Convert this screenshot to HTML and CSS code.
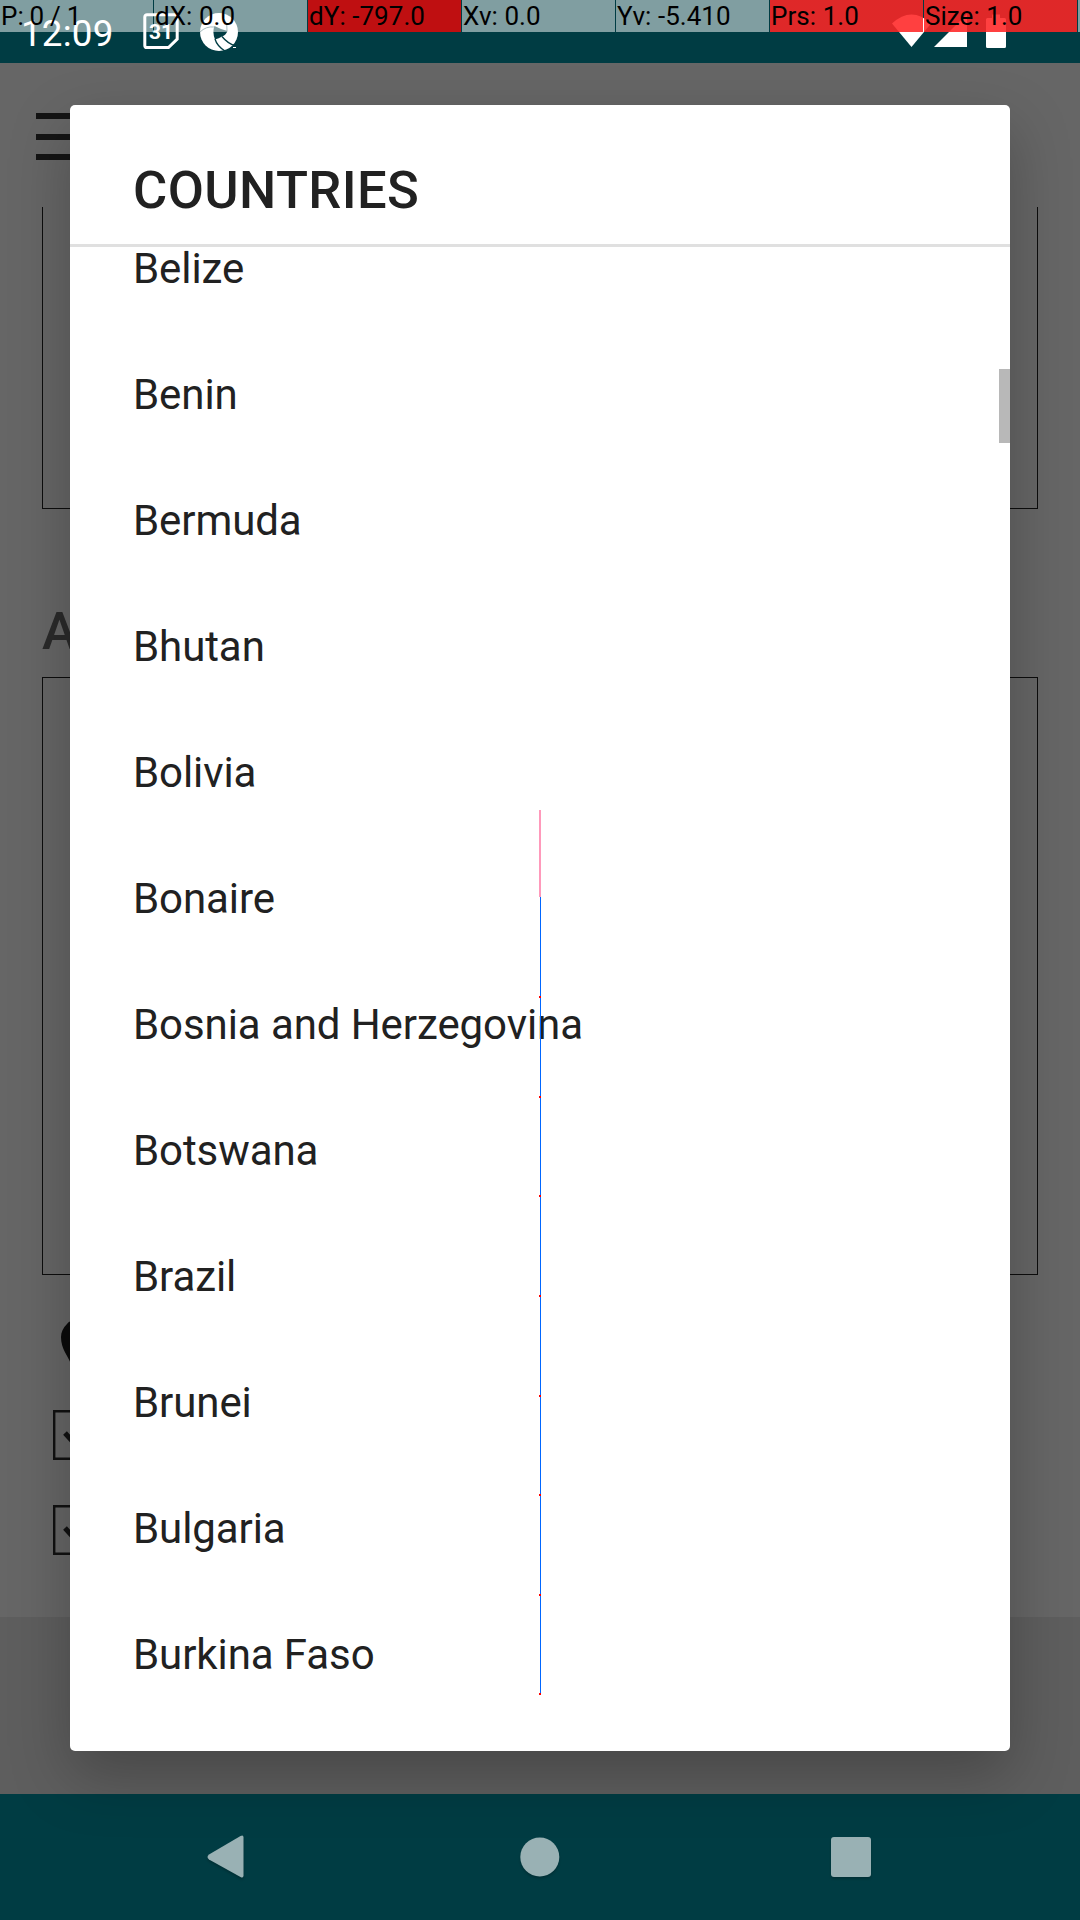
FILE: index.html
```html
<!DOCTYPE html>
<html lang="en">
<head>
<meta charset="utf-8">
<title>Countries</title>
<link rel="stylesheet" href="styles.css">
</head>
<body>
<div class="screen">
  <header class="status">
    <span class="clock">12:09</span>
    <svg class="calendar" viewBox="0 0 36 37">
      <path d="M4 1.7H32a2.2 2.2 0 0 1 2.2 2.2V26L25.500 34.600H4A2.200 2.200 0 0 1 1.800 32.400V3.900A2.200 2.200 0 0 1 4 1.700Z" fill="none" stroke="#fff" stroke-width="3"/>
      <text x="18" y="25.500" text-anchor="middle" class="calendar-day">31</text>
    </svg>
    <svg class="shutter" viewBox="0 0 38 40">
      <circle cx="19" cy="20" r="19" fill="#fff"/>
      <path d="M14.500 14Q20 17 27.500 19Q25.500 23.500 22 24.500Q19 26.500 15 27.500Q12 20 14.500 14Z" fill="#003c43"/>
      <path d="M22 24.500Q28 32 36 34M15 27Q17 34 25 39" fill="none" stroke="#003c43" stroke-width="1.300"/>
      <path d="M14.500 15Q6 14 0 20M27 19Q28 12 24 7" fill="none" stroke="#003c43" stroke-width=".7"/>
      <path d="M33 35.500H36" stroke="#fff" stroke-width="1"/>
    </svg>
    <svg class="signals" viewBox="0 0 116 36">
      <path d="M0 9.500Q19.500-8.500 39 9.500L19.500 33Z" fill="#fff"/>
      <path d="M42 33 75 0V33Z" fill="#fff"/>
      <path d="M95.500 4H100V0.500H108V4H112.500Q114 4 114 5.500V32.500Q114 34 112.500 34H95.500Q94 34 94 32.500V5.500Q94 4 95.500 4Z" fill="#fff"/>
    </svg>
  </header>

  <main class="page">
    <div class="toolbar">
      <div class="burger"><i></i><i></i><i></i></div>
    </div>
    <section class="box box-first"></section>
    <h2 class="section-title">A</h2>
    <section class="box box-second"></section>
    <div class="options">
      <svg class="pin" viewBox="0 0 44 60"><path d="M22 0C16 0 9 2 6 6C2 10 0 14 0 19C0 31 7 38 10 46L22 60C32 46 44 35 44 21C44 8 33 0 22 0Z" fill="#0b0b0b"/></svg>
      <svg class="check" viewBox="0 0 50 50"><path d="M1.200 1.200H48.800V48.800H1.200Z" fill="none" stroke="#111" stroke-width="2.400"/><path d="M12 23 21 33 38 14" fill="none" stroke="#111" stroke-width="5"/></svg>
      <svg class="check" viewBox="0 0 50 50"><path d="M1.200 1.200H48.800V48.800H1.200Z" fill="none" stroke="#111" stroke-width="2.400"/><path d="M12 23 21 33 38 14" fill="none" stroke="#111" stroke-width="5"/></svg>
    </div>
    <div class="page-end"></div>
  </main>

  <nav class="navbar">
    <svg viewBox="0 0 44 44"><path d="M39.500 2.500V40.500Q39.500 43.500 36.500 42L5 24.500Q2 22 5 19.500L36.500 1Q39.500-.5 39.500 2.500Z" /></svg>
    <svg viewBox="0 0 44 44"><circle cx="22.800" cy="22" r="19.500"/></svg>
    <svg viewBox="0 0 44 44"><rect x="2" y="2" width="40" height="40" rx="3"/></svg>
  </nav>

  <div class="dialog">
    <h1 class="dialog-title">COUNTRIES</h1>
    <ul class="countries">
      <li>Belize</li>
      <li>Benin</li>
      <li>Bermuda</li>
      <li>Bhutan</li>
      <li>Bolivia</li>
      <li>Bonaire</li>
      <li>Bosnia and Herzegovina</li>
      <li>Botswana</li>
      <li>Brazil</li>
      <li>Brunei</li>
      <li>Bulgaria</li>
      <li>Burkina Faso</li>
    </ul>
    <div class="thumb"></div>
  </div>

  <svg class="trace" viewBox="0 0 4 886" shape-rendering="crispEdges">
    <rect x="1" y="0" width="2" height="87" fill="#ff99bb"/>
    <rect x="2" y="87" width="1" height="797" fill="#0066ff"/>
    <path d="M1 186h2v2h-2zM1 286h2v2h-2zM1 385h2v2h-2zM1 485h2v2h-2zM1 585h2v2h-2zM1 684h2v2h-2zM1 784h2v2h-2zM1 883h2v2h-2z" fill="#f00"/>
  </svg>

  <div class="pointer-bar">
    <span class="count">P: 0 / 1</span>
    <span>dX: 0.0</span>
    <span class="moved">dY: -797.0</span>
    <span>Xv: 0.0</span>
    <span>Yv: -5.410</span>
    <span class="level">Prs: 1.0</span>
    <span class="level">Size: 1.0</span>
    <span></span>
  </div>
</div>
</body>
</html>
```
FILE: styles.css
```css
* { box-sizing: border-box; }
body {
  margin: 0;
  font-family: Roboto, "Liberation Sans", sans-serif;
}
.screen {
  position: relative;
  width: 1080px;
  height: 1920px;
  overflow: hidden;
  display: flex;
  flex-direction: column;
  background: #666;
}
.status {
  height: 63px;
  flex: none;
  display: flex;
  align-items: flex-start;
  padding-left: 21px;
  background: #003c43;
  color: #fff;
}
.clock {
  width: 122px;
  padding-top: 12px;
  font-size: 36.75px;
  line-height: 43px;
  letter-spacing: .2px;
}
.calendar { width: 36px; height: 37px; margin-top: 13px; }
.calendar-day { font-size: 21px; font-weight: 700; fill: #fff; }
.shutter { width: 38px; height: 40px; margin: 12px 0 0 21px; }
.signals { width: 116px; height: 36px; margin: 14px 0 0 654px; }

.page { flex: 1; display: flex; flex-direction: column; }
.toolbar { height: 144px; flex: none; padding: 50px 36px 0; }
.burger { display: flex; flex-direction: column; gap: 14.5px; width: 60px; }
.burger i { height: 6px; background: #141414; }
.box { margin: 0 42px; flex: none; border: 1px solid #0c0c0c; }
.box-first { height: 302px; border-top: 0; }
.section-title {
  height: 168px;
  margin: 0;
  padding: 91px 42px 0;
  font-size: 52.5px;
  line-height: 62px;
  font-weight: 500;
  color: #2a2a2a;
}
.box-second { height: 598px; }
.options {
  height: 342px;
  flex: none;
  display: flex;
  flex-direction: column;
  padding: 43px 53px 0;
}
.pin { width: 44px; height: 60px; margin: 0 0 32px 8px; }
.check { width: 50px; height: 50px; margin-bottom: 45px; }
.page-end { flex: 1; background: #5e5e5e; }

.navbar {
  height: 126px;
  flex: none;
  display: flex;
  justify-content: space-between;
  padding: 41px 207px 0 204px;
  background: #003c43;
}
.navbar svg {
  width: 44px;
  height: 44px;
  fill: #99b1b4;
  filter: drop-shadow(0 2px 1px rgba(0, 0, 0, .2));
}

.dialog {
  position: absolute;
  left: 70px;
  top: 105px;
  width: 940px;
  height: 1646px;
  border-radius: 5px;
  background: #fff;
  color: #212121;
  box-shadow: 0 24px 60px rgba(0, 0, 0, .25);
}
.dialog-title {
  height: 142px;
  margin: 0;
  padding: 54px 63px 0;
  border-bottom: 3px solid #e0e0e0;
  font-size: 52.5px;
  line-height: 62px;
  font-weight: 500;
  letter-spacing: .4px;
}
.countries {
  margin: 0;
  padding: 0 63px;
  height: 1504px;
  overflow: hidden;
  list-style: none;
  font-size: 42px;
  letter-spacing: -.08px;
}
.countries li { height: 126px; line-height: 126px; }
.countries li:first-child { margin-top: -41px; }
.thumb {
  position: absolute;
  right: 0;
  top: 264px;
  width: 11px;
  height: 74px;
  background: #b8b8b8;
}

.trace { position: absolute; left: 538px; top: 810px; width: 4px; height: 886px; }

.pointer-bar {
  position: absolute;
  left: 0;
  top: 0;
  width: 1080px;
  height: 32px;
  display: flex;
  gap: 1px;
  overflow: hidden;
  color: #000;
  font-size: 26px;
  line-height: 32px;
  white-space: pre;
}
.pointer-bar span {
  width: 153px;
  flex: none;
  padding-left: 1px;
  letter-spacing: .05px;
  background: rgba(255, 255, 255, .5);
}
.pointer-bar .count { word-spacing: -.7px; }
.pointer-bar .moved { background: rgba(255, 0, 0, .75); }
.pointer-bar .level {
  background: linear-gradient(rgba(255, 0, 0, .75), rgba(255, 0, 0, .75)), rgba(255, 255, 255, .5);
}
```
